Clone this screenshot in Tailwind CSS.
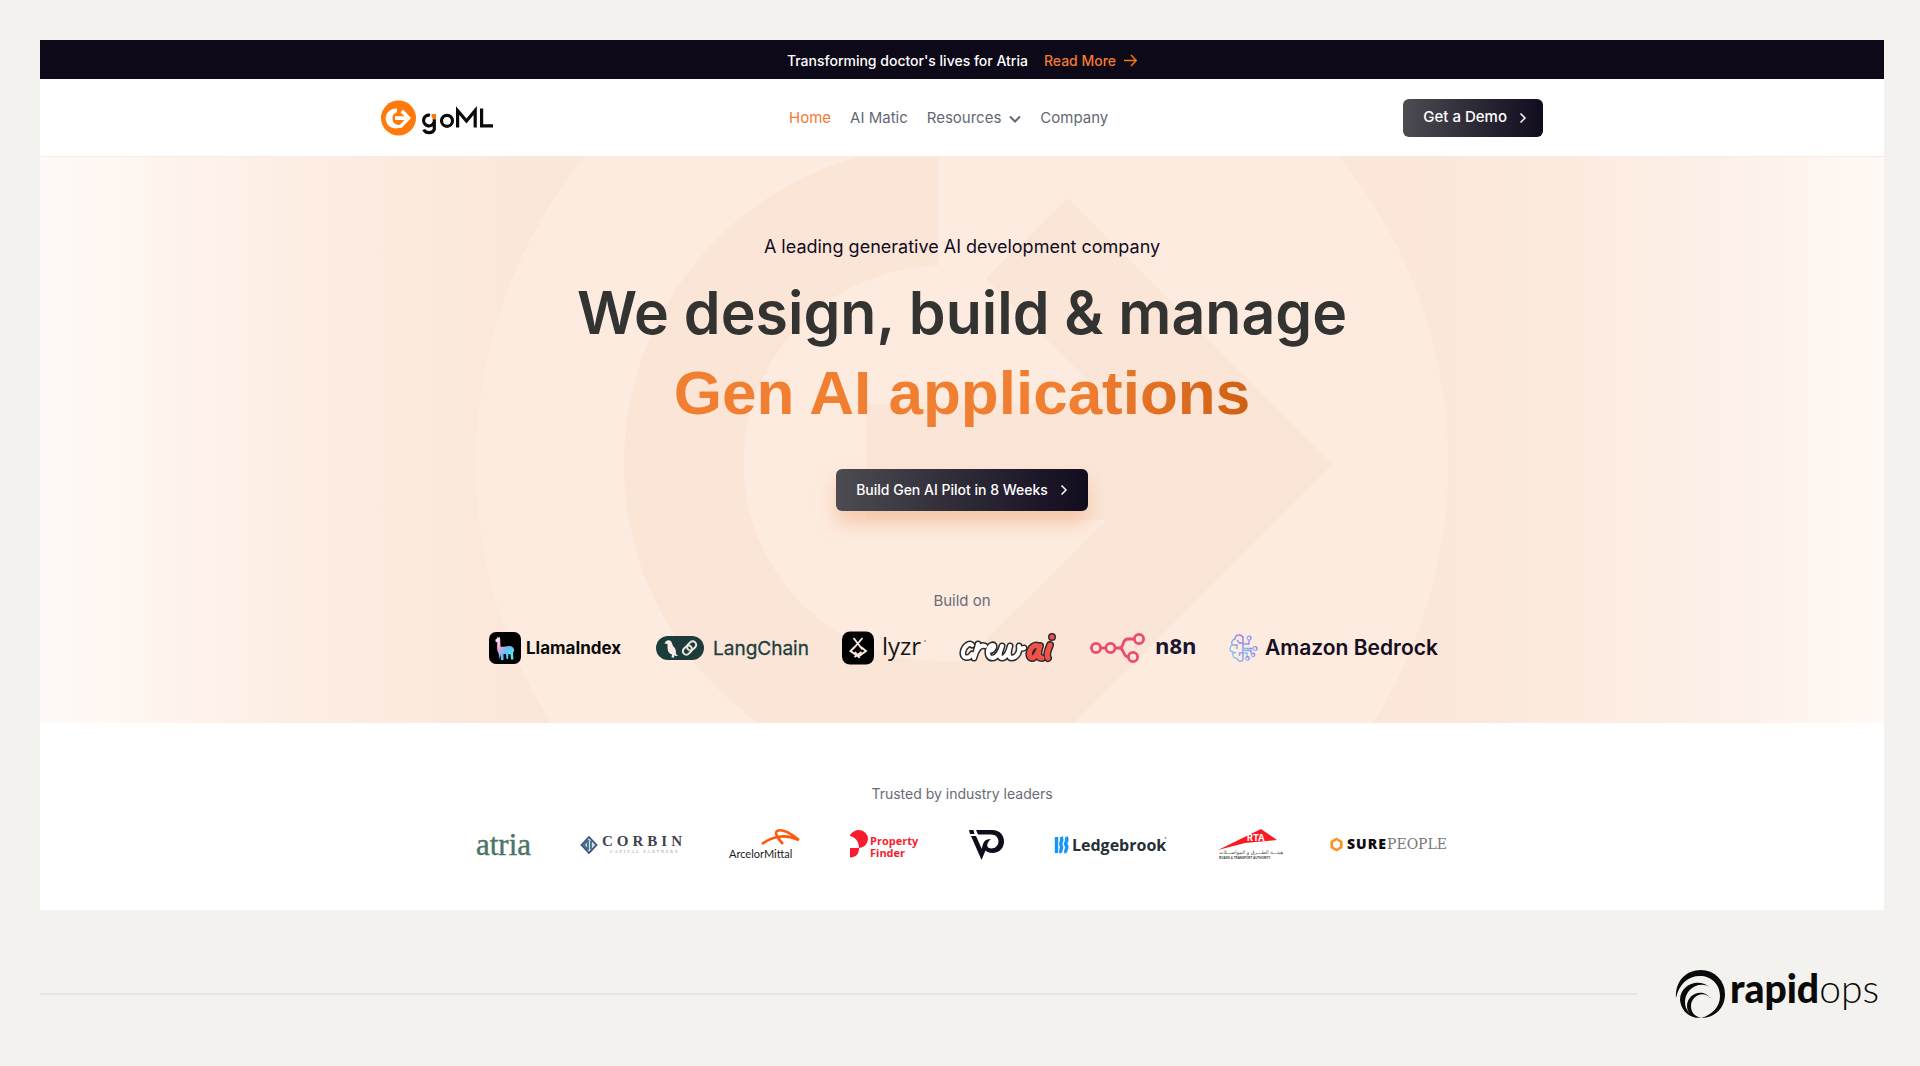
<!DOCTYPE html>
<html lang="en">
<head>
  <meta charset="UTF-8">
  <meta name="viewport" content="width=device-width, initial-scale=1.0">
  <title>goML - Gen AI applications</title>
  <script src="https://cdn.jsdelivr.net/npm/@tailwindcss/browser@4"></script>
</head>
<body class="min-h-screen bg-[#f3f2ee] pr-9 pl-10 pt-10 font-['Inter',sans-serif]">

  <div class="bg-white">
    <!-- Announcement -->
    <div class="flex h-[39px] items-center justify-center gap-4 bg-[#0d0918] pt-0.5 text-sm font-medium text-white">
      <span>Transforming doctor's lives for Atria</span>
      <a href="#" class="flex items-center gap-2 text-[#f27a31]">
        Read More
        <svg class="size-[13px]" viewBox="0 0 13 13" fill="none" stroke="#f7790e" stroke-width="1.5"><path d="M0 6.5h12M7 1l5.3 5.5L7 12" /></svg>
      </a>
    </div>

    <!-- Header -->
    <header class="border-b border-[#f3ece8]">
      <div class="mx-auto flex h-[77px] max-w-[1162px] items-center justify-between">
        <a href="#" aria-label="goML">
          <svg class="h-9 w-[113px]" viewBox="0 0 113 36">
            <circle cx="17.500" cy="18" r="17.500" fill="#ff7a0a" />
            <path d="M16 8.500A10 10 0 1 0 17.500 28H20.500L30 18L22 9.500L19.500 12.500L23.500 16.200H14V20H23.500L18.700 25H17.500A6.500 6.500 0 0 1 16 12.300Z" fill="#fff" />
            <g fill="none" stroke="#0a0a0a" stroke-width="3.200">
              <path d="M49 15.200A5.400 5.400 0 1 0 53 22.500M53.300 19V29.500A5.500 4.500 0 0 1 42.800 29.500" />
              <circle cx="66" cy="20.800" r="5.500" />
              <path d="M76.600 27.500V10.500L85.500 21L94.200 10.500V27.500M100.600 8.500V25.800H112" />
            </g>
            <path d="M50.500 14H55V19.500H52.500L50.500 17Z" fill="#ff7a0a" />
          </svg>
        </a>
        <nav class="flex items-center gap-[19px] pt-0.5 text-[15px] text-[#646872]">
          <a href="#" class="text-[#f27a31]">Home</a>
          <a href="#">AI Matic</a>
          <button type="button" class="flex items-center gap-2">
            Resources
            <svg class="h-3 w-3" viewBox="0 0 12 12" fill="none" stroke="currentColor" stroke-width="2"><path d="M1 3.500L6 8.500L11 3.500" /></svg>
          </button>
          <a href="#">Company</a>
        </nav>
        <button type="button" class="flex h-[38px] items-center gap-3 rounded-md bg-linear-to-r from-[#4d4c51] to-[#120c1f] pr-4 pl-5 text-[15px] font-medium text-white">
          Get a Demo
          <svg class="h-3 w-2" viewBox="0 0 8 12" fill="none" stroke="currentColor" stroke-width="1.500"><path d="M1.500 1.500L6 6L1.500 10.500" /></svg>
        </button>
      </div>
    </header>

    <!-- Hero -->
    <section class="relative overflow-hidden bg-[linear-gradient(90deg,#fffaf7_0%,#fef5ef_6%,#fdede3_14%,#fbe7da_26%,#fbe6d9_74%,#fdebe0_84%,#fcf0e8_91%,#fff9f5_100%)]">
      <svg class="absolute inset-0 size-full" viewBox="475 156 974 567" preserveAspectRatio="xMidYMid meet" overflow="visible">
        <circle cx="962" cy="463" r="487" fill="#fdebdf" />
        <path d="M938 145V265A198 198 0 0 0 944 661H964L1107 520H866V404H1112L986 278L1068 197L1333 464L1016 781H945A318 318 0 0 1 938 145Z" fill="#fae5d7" />
      </svg>

      <div class="relative flex flex-col items-center pt-[76px] pb-[58px]">
        <p class="text-lg leading-7 text-[#120c1f]">A leading generative AI development company</p>
        <h1 class="mt-3 text-center text-[59px] leading-[80px] font-semibold text-[#333332]">
          We design, build &amp; manage<br>
          <span class="bg-linear-to-r from-[#f07f31] from-70% to-[#cf5f12] bg-clip-text font-['Liberation_Sans',sans-serif] text-[62px] font-bold text-transparent">Gen AI applications</span>
        </h1>
        <button type="button" class="mt-9 flex h-[42px] items-center gap-3 rounded-md bg-linear-to-r from-[#4d4c51] to-[#120c1f] px-5 text-sm font-medium text-white shadow-[0_12px_18px_#f2b48c99]">
          Build Gen AI Pilot in 8 Weeks
          <svg class="h-3 w-2" viewBox="0 0 8 12" fill="none" stroke="currentColor" stroke-width="1.500"><path d="M1.500 1.500L6 6L1.500 10.500" /></svg>
        </button>

        <p class="mt-[78px] text-[15px] leading-6 text-[#6b6d78]">Build on</p>
        <div class="mt-[18px] flex items-center gap-8">
          <!-- LlamaIndex -->
          <svg class="h-[34px] w-[135px] overflow-visible" viewBox="0 0 135 34">
            <defs>
              <linearGradient id="llama" x1="0" y1="0" x2="1" y2="1">
                <stop offset="0.100" stop-color="#fbe3f4" /><stop offset="0.350" stop-color="#f3a0dc" /><stop offset="0.600" stop-color="#5cc4f5" /><stop offset="1" stop-color="#5ef0e4" />
              </linearGradient>
            </defs>
            <rect y="1" width="32" height="32" rx="7" fill="#000" />
            <path d="M6.500 8.500L8 7.500L8.500 5.500L9.700 7L10.500 5.500L11.200 8.500L11.500 15.500C14 16.500 18 14.500 21 15C24 15.500 25.500 17.500 25 20L24 22L24.500 28.500H22L21.500 23.500L19.500 23L19 28H17.500L17 23H14.500L14.500 29H12L12 23L10.700 28.500L9.500 22C7.500 19.500 8.300 14 8.300 11.500L6.500 10.500Z" fill="url(#llama)" />
            <text x="37" y="23" class="font-['Inter',sans-serif] text-[17px] font-bold" fill="#0a0a0a">LlamaIndex</text>
          </svg>

          <!-- LangChain -->
          <svg class="h-[34px] w-[154px] overflow-visible" viewBox="0 0 154 34">
            <rect y="5" width="48" height="24" rx="12" fill="#1c3c3c" />
            <path d="M8.500 12.500C9.500 9 14 8 15.500 11L17 15C20 17.500 20 20 20 23L22 25H19.500L18.500 24L18 26.500H15.500L16 23.500C12.500 22.500 11.500 19.500 11.500 16V13Z" fill="#f6ece5" />
            <g transform="rotate(-45 33.500 17)" fill="none" stroke="#e9e4dd" stroke-width="2">
              <rect x="25.500" y="13.500" width="10" height="7" rx="3.500" />
              <rect x="31.500" y="13.500" width="10" height="7" rx="3.500" />
            </g>
            <text x="57" y="24" class="font-['Inter',sans-serif] text-[19px]" fill="#1c4040" stroke="#1c4040" stroke-width="0.300">LangChain</text>
          </svg>

          <!-- lyzr -->
          <svg class="h-[34px] w-[84px] overflow-visible" viewBox="0 0 84 34">
            <rect y="0.500" width="32" height="33" rx="8" fill="#000" />
            <path d="M11.500 7L20.500 18.500M20.500 7L11.500 17.500M12.500 16L8.500 20L16.500 25.500L24 20L19 16M12.500 26L19.500 21M13 21L17.500 27" fill="none" stroke="#fbe9dd" stroke-width="1.900" />
            <text x="40" y="24" class="font-['Open_Sans',sans-serif] text-[24px]" fill="#181414">lyzr</text>
            <circle cx="83" cy="10" r="0.800" fill="#555" />
          </svg>

          <!-- crewAI -->
          <svg class="h-[34px] w-[100px] overflow-visible" viewBox="0 0 100 34">
            <g fill="none" stroke-linecap="round" stroke-linejoin="round">
              <path d="M14 14C12 11 6 15 5 21C4 28 11 28 14 23M20 13C19 18 17 23 16 27C18 19 22 13 27 15M31 20C36 20 38 13 34 14C29 15 28 27 34 27C39 27 43 20 44 15C42 20 40 27 44 27C48 27 51 20 52 15C50 21 50 27 54 27C60 26 62 20 61 15C61 17 63 18 66 17" stroke="#2c2c2c" stroke-width="7" />
              <path d="M80 15C73 12 68 26 74 27C78 27 81 19 82 15C80 21 79 27 84 27M92 14C90 19 88 24 90 27M94 6V6" stroke="#2c2c2c" stroke-width="8" />
              <path d="M14 14C12 11 6 15 5 21C4 28 11 28 14 23M20 13C19 18 17 23 16 27C18 19 22 13 27 15M31 20C36 20 38 13 34 14C29 15 28 27 34 27C39 27 43 20 44 15C42 20 40 27 44 27C48 27 51 20 52 15C50 21 50 27 54 27C60 26 62 20 61 15C61 17 63 18 66 17" stroke="#fff" stroke-width="4" />
              <path d="M80 15C73 12 68 26 74 27C78 27 81 19 82 15C80 21 79 27 84 27M92 14C90 19 88 24 90 27M94 6V6" stroke="#f0524a" stroke-width="5" />
            </g>
          </svg>

          <!-- n8n -->
          <svg class="h-[34px] w-[107px] overflow-visible" viewBox="0 0 107 34">
            <g fill="none" stroke="#ea4b71" stroke-width="2.800">
              <circle cx="6" cy="17" r="4.600" />
              <circle cx="20.500" cy="17" r="4.600" />
              <circle cx="49" cy="8" r="4.600" />
              <circle cx="43" cy="26" r="4.600" />
              <path d="M10.600 17H16M25 17H29C35 17 31 8 38 8H44.500M29 17C35 17 32 26 38.500 26" />
            </g>
            <text x="65" y="23" class="font-['Open_Sans',sans-serif] text-[22px] font-bold" fill="#1b1530">n8n</text>
          </svg>

          <!-- Amazon Bedrock -->
          <svg class="h-[34px] w-[207px] overflow-visible" viewBox="0 0 207 34">
            <defs>
              <linearGradient id="bedrock" x1="0" y1="1" x2="1" y2="0">
                <stop offset="0.100" stop-color="#8fd3f3" /><stop offset="0.500" stop-color="#88a6ee" /><stop offset="1" stop-color="#a06cf0" />
              </linearGradient>
            </defs>
            <g fill="none" stroke="url(#bedrock)" stroke-width="1.400">
              <path d="M14 6C11 2.500 6 4 6 8C2.500 9 2 12 3.500 14C0 16 0 20 3.500 21C3 26 6 27.500 8 27.500C9 31 13 31 14 28.500ZM14 12H10.500L8 9M3.500 14H8V18M14 22H10.500V25M3.500 21L7 22" />
              <path d="M14 13H20V9M14 17.500H24M14 22H18V26M14 19.500H22V22.500" />
              <circle cx="20" cy="7" r="1.900" />
              <circle cx="26" cy="17.500" r="1.900" />
              <circle cx="18.500" cy="27.500" r="1.700" />
              <circle cx="24" cy="24" r="1.700" />
            </g>
            <text x="36" y="24" class="font-['Inter',sans-serif] text-[21px] font-semibold" fill="#150e22">Amazon Bedrock</text>
          </svg>
        </div>
      </div>
    </section>

    <!-- Customers -->
    <section class="flex flex-col items-center pt-[59px] pb-12">
      <p class="text-sm leading-6 text-[#686b76]">Trusted by industry leaders</p>
      <div class="mt-[22px] flex items-center gap-12">
        <!-- atria -->
        <svg class="h-[34px] w-[57px] overflow-visible" viewBox="0 0 57 34">
          <text x="0" y="27" class="font-['Liberation_Serif',serif] text-[31px]" fill="#4a7565" stroke="#4a7565" stroke-width="0.400">atria</text>
        </svg>

        <!-- Corbin -->
        <svg class="h-[34px] w-[100px] overflow-visible" viewBox="0 0 100 34">
          <path d="M8 9L15.500 17L8 25L0.500 17Z" fill="#d3dbe8" stroke="#3d4b7d" stroke-width="1.800" />
          <path d="M7 12V22M7 12L3 17L7 22M10 12.500V21.500" fill="none" stroke="#3f6f8a" stroke-width="1.800" />
          <text x="21" y="18" class="font-['Liberation_Serif',serif] text-[15px] font-bold tracking-[4px]" fill="#3f4350">CORBIN</text>
          <text x="29" y="25" class="font-['Liberation_Serif',serif] text-[4px] tracking-[2px]" fill="#8b8e96">CAPITAL PARTNERS</text>
        </svg>

        <!-- ArcelorMittal -->
        <svg class="h-[34px] w-[72px] overflow-visible" viewBox="0 0 72 34">
          <path d="M33 16C42 9 56 5 70 12M54 16C50 12 45 5 48 3C53 0 63 6 70 12" fill="none" stroke="#ff5a0a" stroke-width="2.600" />
          <text x="0" y="30" class="font-['Lato',sans-serif] text-[11px]" fill="#1a1a1a">ArcelorMittal</text>
        </svg>

        <!-- Property Finder -->
        <svg class="h-[34px] w-[71px] overflow-visible" viewBox="0 0 71 34">
          <path d="M1 7C3 4 6 2 10 2A9 9 0 0 1 10 20C10 13 6 9 1 8Z" fill="#f91c2e" />
          <path d="M1 20H10C10 26 7 29.500 1 29.500Z" fill="#f91c2e" />
          <g class="font-['Open_Sans',sans-serif] text-[11px] font-bold" fill="#f91c2e">
            <text x="21" y="17">Property</text>
            <text x="21" y="29">Finder</text>
          </g>
        </svg>

        <!-- VP -->
        <svg class="h-[34px] w-[38px] overflow-visible" viewBox="0 0 38 34">
          <path d="M1 2H5.500L6.500 6H2ZM8 2H24C40 2 40 25 24 25C21 25 19 24 17.500 22.500L13.500 32L3 8H8L13.800 21C15 15 16 11 23 11C19 14 17 20 23 20.500C33 20.500 33 6.500 23 6.500H10Z" fill="#100c1c" />
        </svg>

        <!-- Ledgebrook -->
        <svg class="h-[34px] w-[113px] overflow-visible" viewBox="0 0 113 34">
          <path d="M2.500 9V25M7 9C9.500 13 5.500 15 7 17C9 20 5.500 22 7 25M12 9C15 13 10 15 12 17C15 20 10 22 12 25" fill="none" stroke="#1595f8" stroke-width="3.400" />
          <text x="18" y="23" class="font-['Open_Sans',sans-serif] text-[16px] font-bold" fill="#253036">Ledgebrook</text>
          <circle cx="111.500" cy="10" r="0.900" fill="#8a8f92" />
        </svg>

        <!-- RTA -->
        <svg class="h-[34px] w-[66px] overflow-visible" viewBox="0 0 66 34">
          <path d="M3 22L46 1L62 12L30 15Z" fill="#fb1a22" />
          <text x="32" y="13" class="font-['Inter',sans-serif] text-[9px] font-bold" fill="#fff">RTA</text>
          <text x="4" y="26" class="font-['DejaVu_Sans',sans-serif] text-[5px]" fill="#4c4c4c">هيئـــة الطـــرق و المواصـــلات</text>
          <text x="4" y="31" class="font-['Liberation_Sans',sans-serif] text-[3px] font-bold" fill="#3a3a3a">ROADS &amp; TRANSPORT AUTHORITY</text>
        </svg>

        <!-- SurePeople -->
        <svg class="h-[34px] w-[119px] overflow-visible" viewBox="0 0 119 34">
          <path d="M7.500 11L12.300 13.800V19.200L7.500 22L2.700 19.200V13.800Z" fill="none" stroke="#fb9322" stroke-width="2.600" />
          <text x="18" y="21" class="font-['Open_Sans',sans-serif] text-[14px] font-extrabold tracking-[1px]" fill="#0c0c0c">SURE</text>
          <text x="58" y="21" class="font-['DejaVu_Serif',serif] text-[14px]" fill="#777">PEOPLE</text>
        </svg>
      </div>
    </section>
  </div>

  <!-- Footer -->
  <footer class="flex items-center gap-10 pt-[59px] pb-10">
    <hr class="flex-1 border-t-2 border-[#e5e4e0]">
    <a href="#" aria-label="rapidops" class="block">
      <svg class="h-[50px] w-[207px] overflow-visible" viewBox="0 0 207 50">
        <g fill="#0a0a0a">
          <path d="M-1 29C-2 12 9 1 24 1A24 24 0 0 1 48 25C48 39 38 49 24 49C35 46 43 38 43 27C43 15 34 7 23 7C11 7 2 15 -1 29Z" />
          <path d="M34 19C24 11 8 19 8 33C8 41 13 46 21 49C9 48 3 38 3 30C4 15 22 8 34 19Z" />
          <path d="M34 30C26 20 14 28 14 37C14 44 18 47 24 49C15 49 10 44 10 37C10 25 26 18 34 30Z" />
        </g>
        <text x="53" y="34" class="font-['Lato',sans-serif] text-[39px]" fill="#0a0a0a"><tspan class="font-black">rapid</tspan><tspan class="font-light">ops</tspan></text>
      </svg>
    </a>
  </footer>

</body>
</html>
